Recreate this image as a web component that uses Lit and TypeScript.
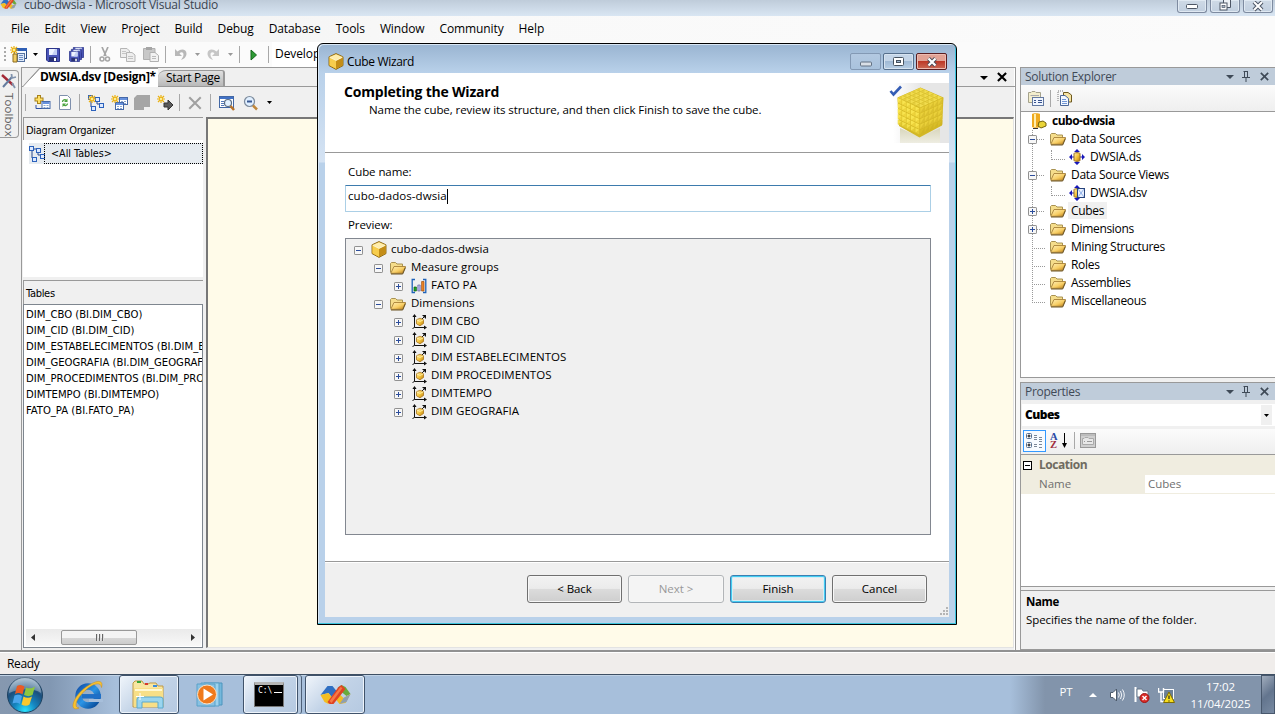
import { LitElement, html, css, svg } from "lit";
import { customElement } from "lit/decorators.js";

const icon = (w: number, h: number, body: unknown) =>
  html`<svg width=${w} height=${h} viewBox="0 0 ${w} ${h}">${body}</svg>`;

const defs = html`<svg class="defs" width="0" height="0">
  <defs>
    <linearGradient id="gold" x1="0" y1="0" x2="1" y2="1"><stop offset="0" stop-color="#fff0b0" /><stop offset=".5" stop-color="#f5c53c" /><stop offset="1" stop-color="#b87c10" /></linearGradient>
    <linearGradient id="fold" x1="0" y1="0" x2="1" y2="1"><stop offset="0" stop-color="#fff0b8" /><stop offset=".55" stop-color="#f8cf66" /><stop offset="1" stop-color="#c07f10" /></linearGradient>
    <radialGradient id="orb" cx=".5" cy=".95" r=".9"><stop offset="0" stop-color="#29e4ff" /><stop offset=".35" stop-color="#1585c0" /><stop offset=".7" stop-color="#1b4f7d" /><stop offset="1" stop-color="#85a3bd" /></radialGradient>
    <linearGradient id="ie" x1="0" y1="0" x2="1" y2="1"><stop offset="0" stop-color="#1456ad" /><stop offset=".5" stop-color="#2c95e6" /><stop offset="1" stop-color="#084a98" /></linearGradient>
    <linearGradient id="fade" x1="0" y1="0" x2="1" y2="0"><stop offset="0" stop-color="#fff" /><stop offset=".5" stop-color="#e6e6e6" /></linearGradient>
    <linearGradient id="fadeDown" x1="0" y1="0" x2="0" y2="1"><stop offset="0" stop-color="#d8d6bc" /><stop offset="1" stop-color="#eeede2" /></linearGradient>
  </defs>
</svg>`;

const cube = () => icon(16, 17, svg`
  <path d="M8 .6 15 3.8V12.6L8 16.4 1 12.6V3.8Z" fill="#e9b526" stroke="#86600f" stroke-width=".9"/>
  <path d="M8 1.2 14.4 4 8 7.2 1.6 4Z" fill="#ffedab"/><path d="M1.5 4.4 8 7.7V15.8L1.5 12.3Z" fill="#f7cd4d"/>
  <path d="M14.5 4.4 8 7.7V15.8L14.5 12.3Z" fill="#c48d17"/><path d="M1.6 4.2 8 7.4 14.4 4.2" fill="none" stroke="#fff8d8"/>`);
const folder = () => icon(16, 14, svg`
  <path d="M.5 11.5V2.5L1.500 1.5H5.500L7 3H12.500V6" fill="#f5dd8b" stroke="#a89252"/>
  <path d="M.8 12.300 4 5.500H15.500L12.500 12.300Z" fill="url(#fold)" stroke="#a98239" stroke-width=".9"/><path d="M1 13H12.700L15.500 6.500" fill="none" stroke="#5e430c" stroke-width=".9"/>`);
const axisCube = () => icon(16, 16, svg`
  <path d="M3.500 2V13.500H14M3.500 13 1.500 15M11 5 13 3" fill="none" stroke="#111"/>
  <path d="M3.500 0 5.600 3H1.400ZM16 13.500 13 11.400V15.600ZM11 1H15V5Z" fill="#111"/>
  <path d="M9 4.200 12.500 5.700V9.500L9 11.800 5.500 9.800V5.700Z" fill="url(#gold)" stroke="#a8741a" stroke-width=".8"/>
  <path d="M5.800 5.900 9 7.400 12.300 5.900" fill="none" stroke="#fff6bd" stroke-width=".8"/>`);
const measures = () => icon(16, 16, svg`
  <path d="M4 1.5H1.2V14.5H4M12 1.5H14.8V14.5H12" fill="none" stroke="#1f62b8" stroke-width="1.3"/>
  <path d="M3 9h2.4v4H3Z" fill="#1eac25" stroke="#105d15" stroke-width=".7"/><path d="M6.8 7h2.4v6H6.8Z" fill="#b8b8ea" stroke="#6967a5" stroke-width=".7"/>
  <path d="M10.6 3.5H13V13h-2.4Z" fill="#ef8525" stroke="#a04d0c" stroke-width=".7"/>`);
const expander = (open: boolean) => icon(9, 9, svg`
  <rect x=".5" y=".5" width="8" height="8" rx=".6" fill="#f7f7f7" stroke="#919191"/>
  <path d=${open ? "M2 4.5H7" : "M2 4.5H7M4.5 2V7"} stroke="#2c4d9b"/>`);
const down = (fill = "#000") => icon(7, 4, svg`<path d="M1 0H6L3.5 3Z" fill=${fill}/>`);
const wideDown = (fill = "#000") => icon(8, 5, svg`<path d="M0 1H8L4 5Z" fill=${fill}/>`);
const infinity = (w: number, h: number) => html`<svg width=${w} height=${h} viewBox="0 0 32 20">
  <path d="M1 10 8 1H13L17 6 12 12 9 8Z" fill="#2f6fc2"/><path d="M1 10 9 8 13 13 9 19 5 17Z" fill="#f2bd22"/>
  <path d="M18 3 22 0 26 2 31 9 27 11 22 7Z" fill="#69ab3c"/><path d="M31 9 26 18 20 19 16 14 21 10 24 13Z" fill="#f2bd22"/>
  <path d="M24 13 31 9 27 17 20 19Z" fill="#8f9fb0"/><path d="M8 17 19 2 22 0 26 4 14 19H10Z" fill="#df4323"/><path d="M10 16 21 2 23 3 12 18Z" fill="#f57945"/></svg>`;
const spark = (x: number, y: number) => svg`<g transform="translate(${x} ${y})"><path d="M4 0V8M0 4H8M1 1 7 7M7 1 1 7" stroke="#eab010" stroke-width="1.200"/><circle cx="4" cy="4" r="1.600" fill="#fff5a8" stroke="#f0ba1b"/></g>`;
const newProject = () => icon(18, 17, svg`
  <rect x="4.5" y="2.5" width="12" height="10" fill="#f4f9ff" stroke="#2a4d86"/><path d="M4 2H17V5H4Z" fill="#2f5fb5"/>
  <rect x="7.500" y="7.500" width="7" height="8" fill="#dfeafa" stroke="#55729f"/><path d="M3 8H7V16H3Z" fill="#f1cd62" stroke="#8d6d20"/><path d="M9 9.500H13M9 11.500H13M9 13.500H13" stroke="#6d8fc4"/>${spark(0, 0)}`);
const disk = (x: number, y: number, s: number) => svg`<g transform="translate(${x} ${y}) scale(${s})"><path d="M.5.5H13.5V13.5H2L.5 12Z" fill="#4a55b8" stroke="#2b348a"/><path d="M3 1H11V7H3Z" fill="#eef3ff"/><path d="M3 9H11V13H3Z" fill="#2a3275"/><path d="M8 10H10V13H8Z" fill="#fff"/><path d="M9 1H11V7H6Z" fill="#c5d1f4"/></g>`;
const save = () => icon(14, 14, disk(0, 0, 1));
const saveAll = () => icon(15, 15, svg`${disk(4, 0, .78)}${disk(2, 2, .78)}${disk(0, 4, .78)}`);
const cut = () => icon(12, 15, svg`<path d="M3 0 7 9M9 0 5 9" stroke="#a5a5a5" stroke-width="1.7"/><circle cx="3" cy="12" r="2" fill="none" stroke="#a5a5a5" stroke-width="1.5"/><circle cx="8.500" cy="12" r="2" fill="none" stroke="#a5a5a5" stroke-width="1.500"/>`);
const copy = () => icon(16, 14, svg`<path d="M.5.5H7L9.500 3V9.500H.5Z" fill="#eee" stroke="#b5b5b5"/><path d="M6.500 4.500H12L15 7V13.500H6.500Z" fill="#eee" stroke="#b5b5b5"/><path d="M2 3.500H6M2 5.500H6M8 8.500H13M8 10.500H13" stroke="#c4c4c4"/>`);
const paste = () => icon(16, 15, svg`<path d="M.5 1.500H12V12.500H.5Z" fill="#c8c8c8" stroke="#b0b0b0"/><path d="M3 0H9V3H3Z" fill="#a5a5a5"/><path d="M7 5.500H12L15.500 8.500V14.500H7Z" fill="#f2f2f2" stroke="#b0b0b0"/><path d="M9 9.500H13M9 11.500H13" stroke="#bbb"/>`);
const curl = (c: string) => svg`<path d="M1 1V8H8L5.500 5.500C7 3.500 9.500 4 9.500 6.500 9.500 9 8 10 7 12 10 11 12.500 9 12.500 5.500 12.500 1 7 0 3.500 3.500Z" fill=${c}/>`;
const undo = () => icon(13, 13, curl("#b8b8b8"));
const redo = () => icon(13, 13, svg`<g transform="matrix(-1 0 0 1 13 0)">${curl("#c6c6c6")}</g>`);
const play = () => icon(8, 12, svg`<path d="M1 1V11L6.500 6Z" fill="#2c9a33" stroke="#14661c"/>`);
const table = (x: number, y: number) => svg`<g transform="translate(${x} ${y})"><rect x=".5" y=".5" width="8" height="7" fill="#fff" stroke="#4568a8"/><path d="M1 1H8V3H1Z" fill="#6791dd"/><path d="M2 4.500H4M5 4.500H7M2 6.500H4M5 6.500H7" stroke="#8aa6cf"/></g>`;
const addTable = () => icon(17, 15, svg`<path d="M5 0V9M.5 4.500H9.500" stroke="#a8821b" stroke-width="4"/><path d="M5 1V8M1.500 4.500H8.500" stroke="#ffe065" stroke-width="2"/><path d="M2 10V13.500H8" fill="none" stroke="#2c4fa2"/>${table(7.5, 6)}`);
const refresh = () => icon(12, 15, svg`<path d="M.5.5H8.500L11.500 3.500V14.500H.5Z" fill="#fff" stroke="#7f90ad"/><path d="M3.500 7C3.500 5 6 4 7.500 5.500M8.500 8.500C8.500 10.500 6 11 4.500 10" fill="none" stroke="#4ba33f" stroke-width="1.300"/><path d="M8.500 3.500V7H5ZM3.500 12V8.500H7Z" fill="#4ba33f"/>`);
const nodes = (x: number, y: number) => svg`<g transform="translate(${x} ${y})"><path d="M3 3V12H7M3 3H9V9H12" fill="none" stroke="#27478b"/><rect x=".5" y=".5" width="4" height="4" fill="#dce9ff" stroke="#2b61bc"/><rect x="7.500" y="2.500" width="4" height="4" fill="#dce9ff" stroke="#2b61bc"/><rect x="3.500" y="11.500" width="4" height="4" fill="#dce9ff" stroke="#2b61bc"/><rect x="11.500" y="8.500" width="4" height="4" fill="#dce9ff" stroke="#2b61bc"/></g>`;
const diagram = () => icon(16, 16, nodes(0, 0));
const newDiagram = () => icon(17, 16, svg`${nodes(0, 0)}${spark(0, 0)}`);
const newQuery = () => icon(17, 16, svg`${table(8, 2)}${table(4, 7)}${spark(0, 0)}`);
const blocked = () => icon(17, 16, svg`<path d="M3 0H16V12H10V15H0V3Z" fill="#a5a5a5"/>`);
const goTo = () => icon(17, 16, svg`<path d="M7 8H11V5L16 10 11 15V12H7Z" fill="#5a5a5a" stroke="#333"/>${spark(0, 0)}`);
const cross = (c: string, s = 11, w = 2) => html`<svg width=${s} height=${s} viewBox="0 0 11 11"><path d="M1 1 10 10M10 1 1 10" stroke=${c} stroke-width=${w}/></svg>`;
const find = () => icon(17, 16, svg`<rect x=".5" y="1.500" width="14" height="11" fill="#fff" stroke="#4267a4"/><path d="M1 2H14V4H1Z" fill="#4172c6"/><path d="M2 6.500H5M2 8.500H5M2 10.500H5" stroke="#5279b9"/><circle cx="9" cy="8" r="3.500" fill="#e4f2ff" stroke="#596c83" stroke-width="1.200"/><path d="M11.500 11 15 15" stroke="#b87228" stroke-width="2.500"/>`);
const zoomOut = () => icon(16, 16, svg`<circle cx="6.500" cy="6.500" r="5" fill="#e0efff" stroke="#7d8b9c" stroke-width="1.200"/><path d="M4 6.500H9" stroke="#385791" stroke-width="2"/><path d="M10 10.500 14 14.500" stroke="#c0873b" stroke-width="2.600"/>`);
const toolbox = () => icon(16, 16, svg`<path d="M1 2 12 12" stroke="#a42835" stroke-width="2.400"/><path d="M11 4 2 14" stroke="#647b9e" stroke-width="2"/><path d="M10.500 1 11 5 15 4M11 10 14 15" fill="none" stroke="#8193ad" stroke-width="1.800"/>`);
const pin = () => icon(8, 11, svg`<path d="M2.500 0V6M1.500 .5H6M5.500 0V6M0 6.500H8M4 7V11" stroke="#3f4a57" fill="none"/><path d="M5 1H6V6H5Z" fill="#3f4a57"/>`);
const propsIcon = () => icon(16, 15, svg`<path d="M.5 11V1.500H3L4 .5H7L8 1.500H12.500V11.500H.5Z" fill="#f3eecd" stroke="#a5a28c"/><path d="M2.500 4.500H11" stroke="#aaa"/><rect x="4.500" y="6.500" width="11" height="8" fill="#eff5ff" stroke="#6479a0"/><path d="M6 9.500H8M10 9.500H14M6 11.500H8M10 11.500H14" stroke="#38528e"/>`);
const showAll = () => icon(16, 16, svg`<path d="M1 11V1H7" fill="none" stroke="#777" stroke-dasharray="1 1"/><path d="M6.500 2.500H11L14.500 5V12H6.500Z" fill="#f7e4a4" stroke="#6d5920"/><path d="M3.500 5.500H8L11.500 8.500V15.500H3.500Z" fill="#f3f8ff" stroke="#4c6797"/><path d="M5 9.500H9M5 11.500H10M5 13.500H10" stroke="#7196d5"/>`);
const projectIcon = () => icon(16, 16, svg`<path d="M1 1C1 0 9 0 9 1V14C9 15 1 15 1 14Z" fill="#efaa20"/><path d="M3 1H5V14H3Z" fill="#ffedab"/><path d="M8 9 12 8 15 10V13L10 15 7 13Z" fill="#e9d437" stroke="#73610c"/><path d="M2 15.500H7" stroke="#333"/>`);
const sourceIcon = (view: boolean) => icon(16, 16, svg`<path d="M8 0 11 3H5ZM8 16 5 13H11ZM0 8 3 5V11ZM16 8 13 5V11Z" fill="#1717b8"/><path d="M2 8H14M8 2V14" stroke="#1717b8"/><path d="M5 4.500C5 3.500 11 3.500 11 4.500V11.500C11 12.500 5 12.500 5 11.500Z" fill="url(#gold)" stroke="#99702a"/>
  ${view ? svg`<rect x="8.500" y="3.500" width="7" height="9" fill="#e8f0ff" stroke="#27427a"/><path d="M9 4 15 12M15 4 9 12" stroke="#8fb0e8"/>` : ""}`);
const categorized = () => icon(17, 16, svg`<rect x=".5" y=".5" width="5" height="5" rx="1" fill="#fff" stroke="#557093"/><rect x=".5" y="9.500" width="5" height="5" rx="1" fill="#fff" stroke="#557093"/><path d="M1.500 3H4.500M3 1.500V4.500M1.500 12H4.500M3 10.500V13.500" stroke="#000"/><path d="M8 2.500H11M13 4.500H16M8 4.500H11M8 6.500H11M13 6.500H16M13 8.500H16M8 11.500H11M8 13.500H11M13 11.500H16M13 14.500H16" stroke="#7b8797"/>`);
const arrowDown = () => icon(5, 15, svg`<path d="M2.500 0V12" stroke="#000"/><path d="M0 10H5L2.500 15Z" fill="#000"/>`);
const pages = () => icon(16, 15, svg`<rect x=".5" y=".5" width="15" height="14" fill="#cfcfcf" stroke="#999"/><path d="M2.500 5.500H4L5 4.500H8L9 5.500H13.500V11.500H2.500Z" fill="#e8e8e8" stroke="#aaa"/><path d="M1 2H15" stroke="#aaa"/><path d="M4 8.500H5M7 8.500H12" stroke="#999"/>`);

const wizardCube = () => {
  const cells: unknown[] = [];
  for (let r = 0; r < 5; r++) {
    for (let c = 0; c < 5; c++) {
      const lx = 23.3 + c * 4.4, ly = 15 + c * 2.1 + r * 5.4;
      cells.push(svg`<path d="M${lx} ${ly} l3.900 1.800 v4.700 l-3.900 -1.900Z" fill=${r > 3 ? "#e3ca32" : "#eed43c"}/><path d="M${lx} ${ly} l3.900 1.800 -3.900 2.800Z" fill="#ffee5c" opacity=".6"/>`);
      const rx = 45.700 + c * 4.500, ry = 25.2 - c * 2 + r * 5.400;
      cells.push(svg`<path d="M${rx} ${ry} l4.100 -1.900 v4.700 l-4.100 1.900Z" fill=${r > 3 ? "#d9be28" : "#ead03a"}/><path d="M${rx} ${ry + 4.7} l4.100 -6.500 v4.700Z" fill="#c5a820" opacity=".4"/>`);
      const tx = 45.500 + (c - r) * 4.500, ty = 4.8 + (c + r) * 2;
      cells.push(svg`<path d="M${tx} ${ty} l4 1.800 -4 1.800 -4 -1.800Z" fill="#e4cd3d"/><path d="M${tx} ${ty} l4 1.800 -4 1.800Z" fill="#f6e354" opacity=".7"/>`);
    }
  }
  return icon(60, 60, svg`
    <rect x="4" width="56" height="60" fill="url(#fade)"/><path d="M11 45 31 54 51 45V60H11Z" fill="url(#fadeDown)"/>
    <g transform="translate(-14.500 0)"><path d="M23 14.500 46 4.500 69 14.500 67.500 42.500 45 54.500 24.500 43Z" fill="#d3b826"/>${cells}</g>
    <path d="M1.500 8 4.500 11.500 12 3.500" fill="none" stroke="#345db5" stroke-width="2.600"/>`);
};

const startOrb = () => icon(38, 38, svg`<circle cx="19" cy="19" r="17.500" fill="url(#orb)" stroke="#1f4261"/><path d="M3 17A16 16 0 0 1 35 17C27 11 12 13 3 17Z" fill="#fff" opacity=".3"/>
  <path d="M11 10C14 8 16 9 18.500 10.500L16.500 18.500C14 17 12 16.500 9 18Z" fill="#e95b25"/><path d="M20 11.500C23 13 26 12.500 29 10.500L26.500 19C24 20.500 21 20.500 18 19Z" fill="#8dc73f"/>
  <path d="M8.500 19.500C11 18.200 14 18.500 16 20L14 28C12 26.500 9.500 26.300 6.500 27.500Z" fill="#4aa5eb"/><path d="M17.500 20.500C20 22 23 22.500 26 20.500L23.500 28.500C21 30.300 18 30 15.500 28.500Z" fill="#f9c82e"/>`);
const ieIcon = () => icon(34, 34, svg`<circle cx="18" cy="18" r="9.500" fill="none" stroke="url(#ie)" stroke-width="6.500"/><path d="M19 21H33V24H19Z" fill="#a7bfdb"/><path d="M12 18.300H31" stroke="#1f6fc6" stroke-width="4.500"/>
  <path d="M9 30C-2 35 3 18 16 9 26 2 34 1 31.500 9.500 31 4 25 5 18 10 8 18 2 29 9 30Z" fill="#f7c232" stroke="#d08d0d" stroke-width=".5"/>`);
const explorerIcon = () => icon(34, 30, svg`<path d="M1 27V3L3 1H10L12 4H16L18 3H24L26 6H31V27Z" fill="#f8e6a2" stroke="#bf9945"/><path d="M2 8H31V27H2Z" fill="#f8df87"/><path d="M3 10H30" stroke="#fff8d3" stroke-width="2"/><path d="M5 1H9V3H5Z" fill="#35a436"/><path d="M13 3H16V5H13Z" fill="#d73a2d"/><path d="M21 5H25V7H21Z" fill="#3c8ddc"/>
  <path d="M5 28V19Q5 17 8 17H28Q31 17 31 19V28H26V22H10V28Z" fill="#9ad5ee" stroke="#5aa9ce"/><path d="M8 13V20M4 16.500H12" stroke="#fff"/>`);
const mediaIcon = () => icon(30, 27, svg`<path d="M8 2H26V24H8Z" fill="#74b8dc" stroke="#4d95bd"/><path d="M5 2H23V25H5Z" fill="#9ed2ec" stroke="#5aa1c8"/><path d="M1 3H19V25H1Z" fill="#88c1e2" stroke="#5aa1c8"/><circle cx="11" cy="13.500" r="9.500" fill="#ef7a1d" stroke="#fbe0c4"/><path d="M7.500 7.500V19.500L17 13.500Z" fill="#fff"/>`);
const speaker = () => icon(15, 14, svg`<path d="M.5 4.500H3L6.500 1V13L3 9.500H.5Z" fill="#fff" stroke="#4c5a6b"/><path d="M8.500 4.500Q10 7 8.500 9.500M10.500 3Q13 7 10.500 11M12.500 1.500Q16 7 12.500 12.500" fill="none" stroke="#f4f7fa"/>`);
const flag = () => icon(16, 16, svg`<path d="M1.500 0V15" stroke="#fff" stroke-width="2"/><path d="M3 2H8L9 4H14V10H3Z" fill="#fff" stroke="#66788b"/><circle cx="10.500" cy="11" r="4.500" fill="#db2b27" stroke="#9d1512"/><path d="M8.500 9 12.500 13M12.500 9 8.500 13" stroke="#fff" stroke-width="1.400"/>`);
const network = () => icon(17, 16, svg`<rect x="5.500" y="2.500" width="10" height="9" fill="#6c8197" stroke="#fff"/><path d="M.5 1V5H5.500V1M3 5V14.500H6" fill="none" stroke="#fff" stroke-width="1.400"/><path d="M11 5 16.500 15.500H5.500Z" fill="#f7df1e" stroke="#816d00"/><path d="M11 8.500V12M11 13.500V14.500" stroke="#222" stroke-width="1.200"/>`);

const menus = ["File", "Edit", "View", "Project", "Build", "Debug", "Database", "Tools", "Window", "Community", "Help"];
const tables = ["DIM_CBO (BI.DIM_CBO)", "DIM_CID (BI.DIM_CID)", "DIM_ESTABELECIMENTOS (BI.DIM_ESTABELECIMENTOS)", "DIM_GEOGRAFIA (BI.DIM_GEOGRAFIA)", "DIM_PROCEDIMENTOS (BI.DIM_PROCEDIMENTOS)", "DIMTEMPO (BI.DIMTEMPO)", "FATO_PA (BI.FATO_PA)"];

type Node = { label: string; level: number; open?: boolean; glyph: () => unknown };
const preview: Node[] = [
  { label: "cubo-dados-dwsia", level: 0, open: true, glyph: cube },
  { label: "Measure groups", level: 1, open: true, glyph: folder },
  { label: "FATO PA", level: 2, open: false, glyph: measures },
  { label: "Dimensions", level: 1, open: true, glyph: folder },
  ...["DIM CBO", "DIM CID", "DIM ESTABELECIMENTOS", "DIM PROCEDIMENTOS", "DIMTEMPO", "DIM GEOGRAFIA"].map((label) => ({ label, level: 2, open: false, glyph: axisCube })),
];
const solution: Node[] = [
  { label: "Data Sources", level: 1, open: true, glyph: folder },
  { label: "DWSIA.ds", level: 2, glyph: () => sourceIcon(false) },
  { label: "Data Source Views", level: 1, open: true, glyph: folder },
  { label: "DWSIA.dsv", level: 2, glyph: () => sourceIcon(true) },
  { label: "Cubes", level: 1, open: false, glyph: folder },
  { label: "Dimensions", level: 1, open: false, glyph: folder },
  ...["Mining Structures", "Roles", "Assemblies", "Miscellaneous"].map((label) => ({ label, level: 1, glyph: folder })),
];

@customElement("app-root")
export class AppRoot extends LitElement {
  static styles = css`
    :host { display: block; position: relative; width: 1275px; height: 714px; overflow: hidden; background: #f0f0f0; color: #000;
      font: 11.5px/18px "Open Sans", "Noto Sans", sans-serif; letter-spacing: -0.08px; white-space: nowrap; }
    * { box-sizing: border-box; }
    svg { display: block; flex: none; }
    .defs { position: absolute; }
    .app { display: flex; flex-direction: column; height: 714px; }
    .title { height: 16px; display: flex; align-items: flex-start; overflow: hidden; background: linear-gradient(#bfccda, #d9e6f3); color: #3b4450; }
    .title .logo { width: 24px; margin-top: -3px; }
    .title .caption { flex: 1; margin-top: -3px; line-height: 16px; font-size: 12px; letter-spacing: -.21px; }
    .win { display: flex; gap: 3px; padding-right: 2px; }
    .win i { width: 30px; height: 13px; border: 1px solid #7e8ba0; border-top: 0; border-radius: 0 0 3px 3px; background: linear-gradient(#cfdae6, #c1cfdf); display: flex; justify-content: center; align-items: center; box-shadow: inset 0 0 0 1px #e0e9f2; }
    .bar { background: linear-gradient(90deg, #f0f0f0, #f9f9f9 480px, #fbfbfb); }
    .menu { height: 26px; display: flex; padding: 4px 0 0 11px; gap: 15px; font-size: 12px; letter-spacing: -.11px; }
    .std { height: 25px; display: grid; grid-template-columns: 10px 18px 15px 20px 26px 3px 25px 21px 25px 5px 24px 10px 22px 13px 5px 23px 7px 130px; place-items: center; }
    .stdwrap { background: #fbfbfb; }
    .combo { background: #fff; justify-self: stretch; align-self: stretch; padding: 3px 3px; font-size: 12px; }
    .sep { width: 1px; height: 17px; background: #a8a8a8; }
    .grip { width: 2px; height: 15px; background: repeating-linear-gradient(#aaa 0 2px, transparent 2px 4px); }
    .main { height: 585px; display: grid; grid-template-columns: 21px 995px 4px 255px; border-bottom: 2px solid #919191; }
    .side { padding-top: 3px; }
    .tooltab { width: 18.500px; height: 68px; border: 1px solid #999; border-left: 0; border-radius: 0 4px 4px 0; padding-top: 2px; display: flex; flex-direction: column; align-items: center; color: #5c5c5c; }
    .tooltab span { writing-mode: vertical-rl; letter-spacing: .1px; line-height: 16px; margin-top: 4px; }
    .doc { border: 1px solid #999; border-bottom: 0; display: flex; flex-direction: column; box-shadow: inset -1px 0 #fff; min-height: 0; }
    .tabs { height: 19px; display: flex; align-items: flex-end; border-bottom: 1px solid #999; }
    .tab { height: 18px; line-height: 17px; font-size: 12px; position: relative; }
    .tab.on { width: 136px; margin: 0 0 -1px 0; padding-left: 18px; font-weight: 700; letter-spacing: -.27px; background: linear-gradient(#999, #999) 17px 0/100% 1px no-repeat, linear-gradient(133deg, transparent 12px, #999 12.500px 13.500px, #fff 14px); clip-path: polygon(0 100%, 17px 0, 100% 0, 100% 100%); height: 19px; }
    .tab.off { width: 67px; padding-left: 8px; height: 16px; line-height: 13px; letter-spacing: -.3px; border: 1px solid #999; border-width: 1px 2px 0 0; border-radius: 8px 3px 0 0; background: linear-gradient(#e0e0e0, #b9b9b9); }
    .tabctl { margin-left: auto; padding: 0 8px 0 0; display: flex; gap: 9px; align-items: center; height: 18px; }
    .tools { height: 30px; display: grid; grid-template-columns: 7px 26px 19px 11px 22px 24px 22px 24px 5px 26px 5px 28px 20px 17px; place-items: center; padding-top: 1px; }
    .work { flex: 1; display: grid; grid-template-columns: 181px 1px 1fr; min-height: 0; padding: 0 1px 2px 0; column-gap: 1px; }
    .left { display: flex; flex-direction: column; min-height: 0; padding-left: 1px; }
    .tah { font-family: "DejaVu Sans Condensed", "DejaVu Sans", sans-serif; font-stretch: condensed; font-size: 11.200px; letter-spacing: 0; }
    .phead { height: 23px; border: 1px solid #999; border-width: 1px 0 0 1px; padding: 4px 2px; }
    .phead.tah { font-size: 11px; letter-spacing: -.3px; }
    .organizer { height: 137px; background: #fff; padding: 3px 0 0 6px; }
    .all { display: flex; gap: 0; height: 21px; align-items: center; background: #e6ebf0; }
    .all.tah { font-size: 10.700px; }
    .all svg { margin-right: -1px; }
    .all span { flex: 1; height: 21px; border: 1px dotted #000; padding: 1px 6px; }
    .phead.second { margin-top: 3px; height: 24px; }
    .list { flex: 1; min-height: 0; background: #fff; border: 1px solid #7e868f; padding: 2px 1px 1px 2px; display: flex; flex-direction: column; line-height: 16px; overflow: hidden; }
    .scroll { height: 17px; margin-top: auto; background: linear-gradient(#eaeaea, #f8f8f8); display: grid; grid-template-columns: 13px 22px 76px 1fr 17px; align-items: center; }
    .scroll svg { justify-self: center; }
    .thumb { height: 15px; border: 1px solid #999; border-radius: 2px; background: linear-gradient(#f4f4f4 50%, #d8d8d8 51%, #ccc); display: flex; gap: 2px; align-items: center; justify-content: center; }
    .thumb i { width: 1px; height: 7px; background: #666; box-shadow: 1px 0 #ddd; }
    .canvas { background: #fffbe9; border: 2px solid #777; border-width: 2px 1px 1px 2px; border-color: #777 #e3e3e3 #e3e3e3 #777; }
    .gutter { background: #f8f8f8; }
    .panel { border: 1px solid #999; border-right: 0; display: flex; flex-direction: column; }
    .right { display: flex; flex-direction: column; min-width: 0; }
    .solution { height: 311px; background: #fff; }
    .properties { margin-top: 4px; height: 268px; background: #fff; }
    .head { height: 17px; background: #bfccda; color: #3f4a57; padding: 0 1px 0 4px; display: grid; grid-template-columns: 1fr 16px 16px 20px; place-items: center; font-size: 12px; line-height: 15px; letter-spacing: -.3px; }
    .head span { justify-self: start; margin-top: -1px; }
    .stools { height: 27px; border-bottom: 1px solid #999; background: linear-gradient(#fbfbfb, #efefef); display: flex; align-items: center; padding-left: 7px; gap: 6px; }
    .tree { position: relative; display: flex; flex-direction: column; }
    .row { display: flex; height: 18px; align-items: center; gap: 5px; }
    .solution .tree { font-size: 12px; letter-spacing: -.3px; line-height: 17px; }
    .solution .row > span { margin-top: -1px; }
    .root { padding-left: 10px; font-weight: 700; letter-spacing: -.5px; }
    .branch { width: 22px; height: 18px; display: flex; align-items: center; margin-left: 7px; margin-right: -5px; padding-top: 1px; }
    .branch.l2 { width: 41px; }
    .branch i { flex: 1; height: 1px; margin-right: 5px; background: repeating-linear-gradient(90deg, #999 0 1px, transparent 1px 2px); }
    .branch.bare i { margin-left: 4px; margin-top: 1px; }
    .branch.l2 i { margin-left: 23px; margin-right: 4px; align-self: flex-start; height: 10px; border: 1px dotted #999; border-width: 0 0 1px 1px; background: none; }
    .trunk { position: absolute; left: 11px; top: 18px; width: 1px; height: 172px; background: repeating-linear-gradient(#999 0 1px, transparent 1px 2px); }
    .branch svg { position: relative; }
    .sel { background: #f0f0f0; padding: 0 3px; margin: 0 -3px; }
    .pick { display: flex; height: 22px; background: #fff; margin: 4px 0 3px 1px; padding: 3px 3px 0; font-weight: 700; justify-content: space-between; line-height: 15px; font-size: 12px; }
    .pick b { letter-spacing: -.55px; }
    .pick span { background: #f0f0f0; width: 11px; margin-top: -2px; height: 20px; display: grid; place-items: center; }
    .pwrap { background: #f0f0f0; }
    .ptools { height: 26px; border-bottom: 1px solid #999; background: linear-gradient(#fbfbfb, #efefef); display: flex; align-items: center; padding: 0 0 2px 2px; gap: 4px; }
    .ptools .sep { margin: 0 1px 0 3px; }
    .chosen { width: 23px; height: 22px; border: 1px solid #3399ff; display: grid; place-items: center; background: #f7fbff; }
    .az { display: flex; flex-direction: column; font: 700 10.500px/8px "Liberation Serif", serif; color: #2949a5; } .az b + b { color: #a02f3f; }
    .cat { display: flex; gap: 7px; align-items: center; background: #f0ede0; height: 20px; padding: 0 2px; color: #6f6b60; font-weight: 700; font-size: 12px; letter-spacing: -.45px; }
    .prop { display: grid; grid-template-columns: 124px 1fr; height: 19px; background: #f0ede0; color: #6f6f6f; letter-spacing: 0; }
    .prop span { padding-left: 18px; } .prop em { font-style: normal; background: #fff; padding-left: 3px; margin-bottom: 1px; }
    .fill { flex: 1; }
    .desc { height: 63px; border-top: 1px solid #999; background: linear-gradient(#999, #999) 0 3px/100% 1px no-repeat, #f0f0f0; padding: 6px 5px; }
    .desc b { display: block; letter-spacing: -.35px; }
    .status { height: 22px; background: #f0edeb; border-top: 1px solid #fff; padding: 2px 7px; line-height: 18px; font-size: 12px; letter-spacing: -.35px; }
    .task { height: 40px; border-top: 1px solid #3e4f63; box-shadow: inset 0 1px #c0d2e5; background: linear-gradient(90deg, #8698af 0, #8197b2 50px, #a7bfdb 115px, #a7bfdb 1010px, #8294ab 1045px); display: grid; grid-template-columns: 50px 69px 60px 64px 60px 2px 60px 1fr 26px 27px 22px 28px 20px 85px 14px; align-items: center; justify-items: center; color: #fff; }
    .ie { padding-left: 5px; }
    .tb { align-self: stretch; justify-self: stretch; border: 1px solid #40536b; border-radius: 3px; background: linear-gradient(135deg, #f0f5fb, #c2d3e7 50%, #b5c9e1); box-shadow: inset 0 0 0 1px #eef4fb; display: grid; place-items: center; }
    .stack { margin-right: 5px; padding-right: 3px; box-shadow: inset 0 0 0 1px #eef4fb, 3px 0 #b3c7de, 4px 0 #4d6078; }
    .cmd { width: 30px; height: 25px; background: #000; border: 1px solid #777; border-top: 3px solid #b5b5b5; color: #fff; font: 8px/12px "DejaVu Sans Mono", monospace; padding-left: 3px; display: flex; }
    .cmd i { width: 8px; height: 8px; border-bottom: 1px solid #fff; margin-left: 2px; }
    .pt { padding-bottom: 6px; }
    .clock { text-align: center; line-height: 17px; letter-spacing: -.1px; font-size: 11.500px; padding: 1px 0 0 4px; }
    .peek { align-self: stretch; justify-self: stretch; border: 1px solid #48586d; background: linear-gradient(135deg, #a1adbd, #63758e 50%, #788aa2); }
    .dialog { position: absolute; left: 317px; top: 43px; width: 640px; height: 582px; border: 1px solid #000; border-radius: 6px 6px 0 0; padding: 0 7px 7px; background: linear-gradient(#99b4d1, #b9d1ea 29px, #d5e3f3 118px, #b9d1ea 119px); box-shadow: inset -1px -1px #3bc4dd, inset 1px 1px #d9e7f5; display: flex; flex-direction: column; }
    .dtitle { height: 29px; display: flex; align-items: center; padding: 6px 2px 0 3px; gap: 2px; font-size: 12px; letter-spacing: -.33px; }
    .dtitle span { flex: 1; padding-left: 1px; }
    .dbtn { width: 31px; height: 17px; border: 1px solid #566f8c; border-radius: 2px; display: grid; place-items: center; background: linear-gradient(#c4d5e8 45%, #9eb8d4 46%, #b7cee5); box-shadow: inset 0 0 0 1px #d6e3f0; }
    .dbtn.dim { border-color: #8399b4; background: linear-gradient(#b3c9e1, #a9c2dd); box-shadow: none; }
    .dbtn.x { border-color: #5b1e21; background: linear-gradient(#e2a295 45%, #bc3524 46%, #cb6a55); box-shadow: inset 0 0 0 1px #edbbb1; }
    .dhead { height: 80px; background: #fff; border-bottom: 1px solid #999; display: flex; justify-content: space-between; padding: 10px 0 0 19px; }
    .dhead h1 { margin: -1px 0 0; font-size: 14px; line-height: 19px; letter-spacing: -.2px; }
    .dhead p { margin: 0 0 0 25px; line-height: 17px; }
    .dbody { height: 408px; background: #fff; padding: 10px 18px 0 20px; display: flex; flex-direction: column; }
    .dbody label { padding-left: 3px; height: 22px; }
    .input { height: 27px; border: 1px solid #abcfe6; border-top-color: #3d7bad; border-radius: 1px; padding: 1px 2px; display: flex; letter-spacing: .07px; }
    .input i { width: 1px; height: 15px; background: #000; margin-top: 2px; }
    .dbody label.pv { padding-top: 4px; height: 26px; }
    .preview { height: 297px; background: #f0f0f0; border: 1px solid #828790; padding: 1px 0 0 8px; letter-spacing: .03px; }
    .preview .row { gap: 0; }
    .preview .row > svg { margin-top: 2px; }
    .glyph { width: 28px; padding: 1px 0 0 3px; display: flex; justify-content: center; }
    .pad1 { padding-left: 20px; } .pad2 { padding-left: 40px; }
    .pad1 .glyph { padding-left: 1px; }
    .dfoot { flex: 1; background: #f0f0f0; border-top: 1px solid #999; box-shadow: inset 0 1px #fff; padding: 13px 22px 0; display: flex; justify-content: flex-end; gap: 6px; position: relative; }
    .btn { width: 96px; height: 28px; border: 1px solid #707070; border-radius: 3px; box-shadow: inset 0 0 0 1px #f7f7f7; background: linear-gradient(#f2f2f2, #ebebeb 48%, #dcdcdc 49%, #cecece); font: inherit; color: #000; letter-spacing: -.05px; padding: 0 0 1px; }
    .btn.edge { width: 95px; }
    .btn.off { border-color: #b2b5b8; background: #f4f4f4; color: #999; }
    .btn.def { border-color: #3c7fb1; box-shadow: inset 0 0 0 1px #43cdf2, inset 0 0 0 2px #d5edf5; }
    .size { position: absolute; right: 1px; bottom: 1px; }
  `;

  private panelHead(name: string) {
    return html`<div class="head"><span>${name}</span>${wideDown("#3f4a57")}${pin()}${cross("#3f4a57", 9, 2)}</div>`;
  }

  render() {
    return html`${defs}
    <div class="app">
      <div class="title"><div class="logo">${infinity(17, 14)}</div><div class="caption">cubo-dwsia - Microsoft Visual Studio</div>
        <div class="win"><i>${icon(12, 5, svg`<rect x=".5" y=".5" width="11" height="4" rx="1" fill="#fff" stroke="#4d5665"/>`)}</i>
        <i>${icon(13, 12, svg`<path d="M4.500 0V7.500H11.500V0" fill="#eef2f6" stroke="#4d5665"/><rect x="1" y="3" width="7" height="7" fill="#fff" stroke="#4d5665"/><rect x="3" y="5.500" width="3" height="2" fill="#aab7c7" stroke="#4d5665" stroke-width=".7"/>`)}</i>
        <i>${icon(12, 11, svg`<path d="M2 1 10 9M10 1 2 9" stroke="#4d5665" stroke-width="4"/><path d="M2 1 10 9M10 1 2 9" stroke="#fff" stroke-width="2"/>`)}</i></div></div>
      <div class="bar menu">${menus.map((m) => html`<span>${m}</span>`)}</div>
      <div class="stdwrap"><div class="std"><i class="grip"></i>${newProject()}${down()}${save()}${saveAll()}<i class="sep"></i>${cut()}${copy()}${paste()}<i class="sep"></i>${undo()}${down("#999")}${redo()}${down("#999")}<i class="sep"></i>${play()}<i class="sep"></i><div class="combo">Development</div></div></div>
      <div class="main">
        <div class="side"><div class="tooltab">${toolbox()}<span>Toolbox</span></div></div>
        <div class="doc">
          <div class="tabs"><div class="tab on">DWSIA.dsv [Design]*</div><div class="tab off">Start Page</div><div class="tabctl">${wideDown()}${cross("#000", 10, 2.3)}</div></div>
          <div class="tools"><i class="sep"></i>${addTable()}${refresh()}<i class="sep"></i>${newDiagram()}${newQuery()}${blocked()}${goTo()}<i class="sep"></i>${cross("#a0a0a0", 14, 1.6)}<i class="sep"></i>${find()}${zoomOut()}${down()}</div>
          <div class="work">
            <div class="left">
              <div class="phead tah">Diagram Organizer</div>
              <div class="organizer"><div class="all tah">${diagram()}<span>&lt;All Tables&gt;</span></div></div>
              <div class="phead second tah">Tables</div>
              <div class="list tah">${tables.map((t) => html`<div>${t}</div>`)}
                <div class="scroll">${icon(4, 7, svg`<path d="M4 0V7L0 3.500Z" fill="#333"/>`)}<span></span><div class="thumb"><i></i><i></i><i></i></div><span></span>${icon(4, 7, svg`<path d="M0 0V7L4 3.500Z" fill="#333"/>`)}</div></div>
            </div><div></div><div class="canvas"></div>
          </div>
        </div>
        <div class="gutter"></div>
        <div class="right">
          <div class="panel solution">${this.panelHead("Solution Explorer")}
            <div class="stools">${propsIcon()}<i class="sep"></i>${showAll()}</div>
            <div class="tree"><div class="trunk"></div><div class="row root">${projectIcon()}<span>cubo-dwsia</span></div>
              ${solution.map((n) => html`<div class="row"><div class="branch l${n.level} ${n.open === undefined ? "bare" : ""}">${n.open === undefined ? "" : expander(n.open)}<i></i></div>${n.glyph()}<span class=${n.label === "Cubes" ? "sel" : ""}>${n.label}</span></div>`)}</div></div>
          <div class="panel properties">${this.panelHead("Properties")}
            <div class="pwrap"><div class="pick"><b>Cubes</b><span>${icon(5, 3, svg`<path d="M0 0H5L2.500 3Z"/>`)}</span></div>
              <div class="ptools"><div class="chosen">${categorized()}</div><div class="az"><b>A</b><b>Z</b></div>${arrowDown()}<i class="sep"></i>${pages()}</div></div>
            <div class="cat">${icon(9, 9, svg`<rect x=".5" y=".5" width="8" height="8" fill="#fff" stroke="#000"/><path d="M2 4.500H7" stroke="#000"/>`)}Location</div>
            <div class="prop"><span>Name</span><em>Cubes</em></div>
            <div class="fill"></div>
            <div class="desc"><b>Name</b>Specifies the name of the folder.</div></div>
        </div>
      </div>
      <div class="status">Ready</div>
      <div class="task">${startOrb()}<div class="ie">${ieIcon()}</div><div class="tb">${explorerIcon()}</div>${mediaIcon()}<div class="tb stack"><div class="cmd">C:\\<i></i></div></div><i></i><div class="tb">${infinity(33, 20)}</div><span></span><span class="pt">PT</span>${icon(8, 4, svg`<path d="M0 4 4 0 8 4Z" fill="#fff"/>`)}${speaker()}${flag()}${network()}<div class="clock">17:02<br />11/04/2025</div><div class="peek"></div></div>
    </div>
    <div class="dialog">
      <div class="dtitle">${cube()}<span>Cube Wizard</span>
        <div class="dbtn dim">${icon(12, 12, svg`<rect x=".5" y="6" width="11" height="4" rx="1" fill="#d9dfe7" stroke="#627183"/>`)}</div>
        <div class="dbtn">${icon(11, 9, svg`<rect x=".5" y=".5" width="10" height="8" rx="1" fill="#fff" stroke="#46525f"/><rect x="3.500" y="3.500" width="4" height="2" fill="#9fb8d1" stroke="#46525f"/>`)}</div>
        <div class="dbtn x">${icon(12, 10, svg`<path d="M2.500 1.500 9.500 8.500M9.500 1.500 2.500 8.500" stroke="#4c4c58" stroke-width="4"/><path d="M2.500 1.500 9.500 8.500M9.500 1.500 2.500 8.500" stroke="#fff" stroke-width="2.200"/>`)}</div></div>
      <div class="dhead"><div><h1>Completing the Wizard</h1><p>Name the cube, review its structure, and then click Finish to save the cube.</p></div>${wizardCube()}</div>
      <div class="dbody"><label>Cube name:</label><div class="input">cubo-dados-dwsia<i></i></div><label class="pv">Preview:</label>
        <div class="preview">${preview.map((n) => html`<div class="row pad${n.level}">${expander(!!n.open)}<div class="glyph">${n.glyph()}</div><span>${n.label}</span></div>`)}</div></div>
      <div class="dfoot"><button class="btn edge">&lt; Back</button><button class="btn off">Next &gt;</button><button class="btn def">Finish</button><button class="btn edge">Cancel</button>
        <div class="size">${icon(9, 9, svg`<path d="M7 1h2M4 4h2M7 4h2M1 7h2M4 7h2M7 7h2" stroke="#b5b5b5" stroke-width="2"/>`)}</div></div>
    </div>`;
  }
}
